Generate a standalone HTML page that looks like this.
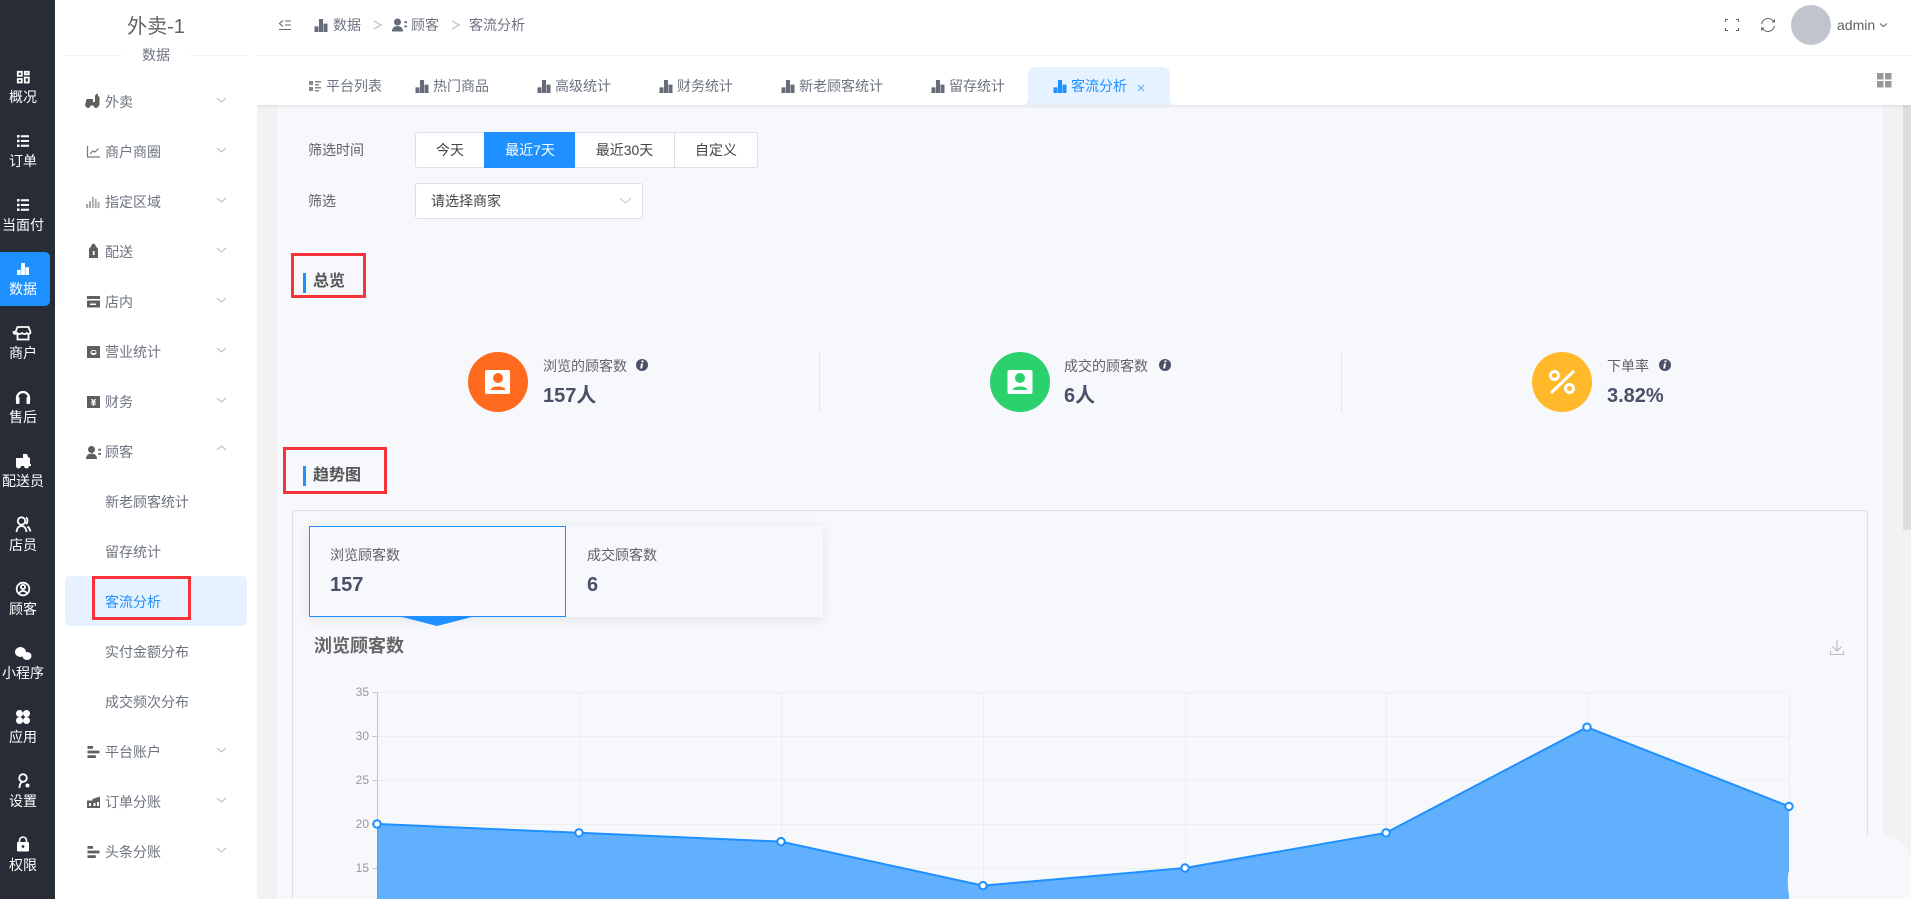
<!DOCTYPE html>
<html lang="zh"><head><meta charset="utf-8"><title>客流分析</title>
<style>
html,body{margin:0;padding:0;width:1911px;height:899px;overflow:hidden;background:#f2f2f2;font-family:"Liberation Sans","Noto Sans CJK SC",sans-serif;}
#w{position:relative;width:1911px;height:899px;overflow:hidden;background:#f2f2f2}
#w div,#w span{position:absolute;box-sizing:border-box}
.t{white-space:nowrap;line-height:20px;font-size:14px;height:20px}
.r{left:0;width:46px;text-align:center;color:#fff}
.m{left:105px;color:#6d7380}
.tb{color:#6d7380;top:76px}
.l{color:#606266}
.b{top:132px;height:36px;background:#fff;border:1px solid #dcdfe6;line-height:34px;text-align:center;font-size:14px;color:#444;white-space:nowrap}
.red{border:3px solid #f63338}
.v{font-weight:bold;color:#4a5068;font-size:20px;line-height:24px;height:24px;white-space:nowrap}
svg{position:absolute;left:0;top:0}
</style></head><body><div id="w">

<div style="left:277px;top:105px;width:1606px;height:794px;background:#f6f8fc"></div>
<div style="left:1903px;top:105px;width:8px;height:425px;background:#dedede"></div>
<div style="left:257px;top:0;width:1654px;height:105px;background:#fff;box-shadow:0 1px 4px rgba(0,0,0,.1)"></div>
<div style="left:257px;top:55px;width:1654px;height:1px;background:#f2f2f2"></div>
<div style="left:55px;top:0;width:202px;height:899px;background:#fff"></div>
<div style="left:0;top:0;width:55px;height:899px;background:#282c36"></div>
<div style="left:0;top:252px;width:50px;height:54px;background:#1e90ff;border-radius:0 5px 5px 0"></div>
<div style="left:65px;top:55px;width:182px;height:1px;background:#f2f2f2"></div>
<div style="left:122px;top:50px;width:68px;height:12px;background:#fff"></div>
<div style="left:65px;top:576px;width:182px;height:50px;background:#e6f2ff;border-radius:5px"></div>

<div style="left:292px;top:510px;width:1576px;height:389px;border:1px solid #dcdfe6;border-bottom:0;border-radius:2px 2px 0 0"></div>
<div style="left:309px;top:526px;width:514px;height:91px;background:#f6f8fc;box-shadow:0 2px 12px rgba(0,0,0,.09)"></div>
<div style="left:309px;top:526px;width:257px;height:91px;background:#f6f8fc;border:1px solid #1e90ff"></div>

<svg width="1911" height="899" viewBox="0 0 1911 899" fill="none">
<defs>
<symbol id="bar" viewBox="0 0 14 14"><path fill="currentColor" d="M0 8h4.300v6H0zM4.800 0h4.400v14H4.800zM9.700 5H14v9H9.700z"/></symbol>
<symbol id="list" viewBox="0 0 12 12"><path fill="currentColor" d="M0 0h2.500v2.500H0zM3.800 .2H12v2H3.800zM0 4.800h2.500v2.500H0zM3.800 5H12v2H3.800zM0 9.500h2.500V12H0zM3.800 9.800H12v2H3.800z"/></symbol>
<symbol id="hb" viewBox="0 0 13 13"><path fill="currentColor" d="M0 0h6v3H0zM0 5h13v3H0zM0 10h9v3H0z"/></symbol>
<symbol id="cust" viewBox="0 0 15 13"><circle cx="5.500" cy="3.500" r="3.500" fill="currentColor"/><path fill="currentColor" d="M0 13c0-3.800 2.500-5.500 5.500-5.500S11 9.200 11 13zM12.300 2.800h2.700v1.800h-2.700zM12.300 7h2.700v1.800h-2.700z"/></symbol>
</defs>

<!-- rail icons -->
<g fill="none" stroke="#fff" stroke-width="1.800">
<path d="M17.800 71.800h4v4h-4zM24.800 71.800h4v2.500h-4zM17.800 79h4v3.500h-4zM24.800 77.500h4v5h-4z"/>
<path d="M15.500 332l2-5h11l2 5c0 2-2.500 2.500-3.700 1-1 1.500-3.300 1.500-4.800 0-1.500 1.500-3.800 1.500-4.800 0-1.200 1.500-3.700 1-3.700-1zM17.500 334v5.500h11V334"/>
<path d="M17 401v-3a6 6 0 0 1 12 0v3" stroke-width="2.300"/>
<circle cx="21.500" cy="521" r="3.700"/><path d="M16.500 532c.5-4 2.500-6 5-6s4.500 2 5 6M26 517.500c2 1 2 5 0 6.500M27.500 526.500c1.500 1.200 2.500 3 3 5"/>
<circle cx="23" cy="589" r="6.300"/><circle cx="23" cy="587" r="2.100"/><path d="M19 593.500c1-2 2.500-2.500 4-2.500s3 .5 4 2.500"/>
<circle cx="23" cy="778" r="3.800"/><path d="M19.500 788c0-3 1-5 2.500-6"/>
</g>
<g fill="#fff">
<use href="#list" x="17" y="135" width="12" height="12" color="#fff"/>
<use href="#list" x="17" y="199" width="12" height="12" color="#fff"/>
<use href="#bar" x="16" y="263" width="14" height="12" preserveAspectRatio="none" color="#fff"/>
<rect x="16" y="397" width="3.500" height="7" rx="1"/><rect x="26.500" y="397" width="3.500" height="7" rx="1"/>
<path d="M16 458h7v-4h4l1 3 2 1v6h1v2h-2a2.500 2.500 0 0 1-5 0h-3a2.500 2.500 0 0 1-5 0z"/>
<ellipse cx="20.500" cy="652" rx="5.500" ry="5"/><ellipse cx="27" cy="656" rx="4.500" ry="4"/>
<circle cx="19.500" cy="713.500" r="3.500"/><circle cx="26.500" cy="713.500" r="3.500"/><circle cx="19.500" cy="720.500" r="3.500"/><circle cx="26.500" cy="720.500" r="3.500"/>
<circle cx="27.500" cy="785.500" r="2"/>
<rect x="17" y="842" width="12" height="9.500" rx="1"/>
</g>
<path d="M19.500 842v-1.500a3.500 3.500 0 0 1 7 0V842" stroke="#fff" stroke-width="1.600"/>
<circle cx="23" cy="846.500" r="1.400" fill="#282c36"/>

<!-- menu icons -->
<g fill="#5f5f5f">
<path d="M86.500 99h6.500v3h2v-6.500l1.500-1.500h1.500v2l1.500 1v8.500h-1a2.500 2.500 0 0 1-5 0h-3a2.500 2.500 0 0 1-5 0h-.500z"/>
<path d="M87 296h13v3H87zM87 300.500h13v7H87z"/>
<rect x="90" y="303.500" width="6" height="1.500" fill="#fff"/>
<path d="M87 346h13v12H87z"/><rect x="90.500" y="350" width="6" height="5" rx="2.500" fill="#fff"/><rect x="91.800" y="351" width="3.500" height="2" fill="#5f5f5f"/>
<rect x="87" y="396" width="13" height="12"/><path d="M91 399h1.500l1 1.700 1-1.700H96l-1.500 2.500H96v1h-1.800v1H96v1h-1.800v1.200h-1.400V404.500H91v-1h1.800v-1H91v-1h1.500z" fill="#fff"/>
<use href="#cust" x="86" y="446" width="15" height="13" color="#5f5f5f"/>
<use href="#hb" x="87" y="746" width="13" height="12" preserveAspectRatio="none" color="#5f5f5f"/>
<use href="#hb" x="87" y="846" width="13" height="12" preserveAspectRatio="none" color="#5f5f5f"/>
<path d="M87 800.500h5.500V799l7.500-2.500V808H87z"/><path d="M89 803h2v3h-2zM93.500 803h2v3h-2zM97 802h2v4h-2z" fill="#fff"/>
<path d="M91.500 245.800a2 2 0 1 1 4 0l2.500 3V258h-9v-9.200z"/><rect x="92.800" y="251" width="1.800" height="4" fill="#fff"/>
</g>
<path d="M87.500 146v11h12.500M90 154l3-3 2 1 3.500-3.500" stroke="#777" stroke-width="1.200"/>
<path d="M86 208v-4h2.200v4zM89 208v-7h2v7zM92 208v-11h1.800v11zM94.800 208v-9h1.800v9zM97.500 208v-6h2v6z" fill="#aaa"/>

<!-- menu chevrons -->
<g stroke="#b5b8bf" stroke-width="1" fill="none">
<path d="M217 98l4.500 4 4.500-4M217 148l4.500 4 4.500-4M217 198l4.500 4 4.500-4M217 248l4.500 4 4.500-4M217 298l4.500 4 4.500-4M217 348l4.500 4 4.500-4M217 398l4.500 4 4.500-4M217 450l4.500-4 4.500 4"/>
<path d="M217 748l4.500 4 4.500-4M217 798l4.500 4 4.500-4M217 848l4.500 4 4.500-4"/>
</g>

<!-- header icons -->
<g stroke="#666" stroke-width="1.100" fill="none">
<path d="M285 21h6M285 25h6M279 29.500h12M283 20.500l-3.500 3 3.500 3"/>
<path d="M1725.500 22v-2.500h2.500M1736 19.500h2.500V22M1725.500 28v2.500h2.500M1738.500 28v2.500H1736"/>
<path d="M1773.600 21.700A6.500 6.500 0 0 0 1761.600 24M1762.400 28.300A6.500 6.500 0 0 0 1774.400 26"/>
<path d="M1880 23.500l3.500 3 3.500-3"/>
</g>
<path d="M1771.500 22.500h3.500V19zM1764.500 27.500H1761V31z" fill="#666"/>
<circle cx="1811" cy="25" r="20" fill="#bfc4cd"/>
<use href="#bar" x="314" y="19" width="14" height="13" preserveAspectRatio="none" color="#666b7a"/>
<use href="#cust" x="392" y="18" width="15" height="14" preserveAspectRatio="none" color="#666b7a"/>
<path d="M374 21l7 4-7 4M452 21l7 4-7 4" stroke="#c4c7cc" stroke-width="1.500" fill="none"/>

<!-- tab icons -->
<path d="M309 81h4v4h-4zM315 81h6v1.500h-6zM315 84h4v1.500h-4zM309 87h4v4h-4zM315 87h6v1.500h-6zM315 90h4v1.500h-4z" fill="#888"/>
<use href="#bar" x="415" y="80" width="14" height="13" preserveAspectRatio="none" color="#666b7a"/>
<use href="#bar" x="537" y="80" width="14" height="13" preserveAspectRatio="none" color="#666b7a"/>
<use href="#bar" x="659" y="80" width="14" height="13" preserveAspectRatio="none" color="#666b7a"/>
<use href="#bar" x="781" y="80" width="14" height="13" preserveAspectRatio="none" color="#666b7a"/>
<use href="#bar" x="931" y="80" width="14" height="13" preserveAspectRatio="none" color="#666b7a"/>
<path d="M1022 105Q1028 105 1028 97V75Q1028 67 1036 67H1162Q1170 67 1170 75V97Q1170 105 1176 105Z" fill="#e6f2ff"/>
<use href="#bar" x="1053" y="80" width="14" height="13" preserveAspectRatio="none" color="#1e90ff"/>
<path d="M1138 85l6 6M1144 85l-6 6" stroke="#5aa9f8" stroke-width="1"/>
<path d="M1877 73h6.500v6.500H1877zM1885 73h6.500v6.500H1885zM1877 81h6.500v6.500H1877zM1885 81h6.500v6.500H1885z" fill="#999"/>

<!-- section bars -->
<rect x="303" y="273" width="3" height="20" fill="#1e90ff"/>
<rect x="303" y="466" width="3" height="20" fill="#1e90ff"/>

<!-- stats -->
<circle cx="498" cy="382" r="30" fill="#ff6a1f"/>
<rect x="485" y="370" width="25" height="24" rx="2" fill="#fff"/>
<circle cx="498" cy="378" r="5" fill="#ff6a1f"/><path d="M490.500 390c1-3 4-3.500 7.500-3.500s6.500.5 7.500 3.500z" fill="#ff6a1f"/>
<circle cx="1020" cy="382" r="30" fill="#2ad16c"/>
<rect x="1007.500" y="370" width="25" height="24" rx="2" fill="#fff"/>
<circle cx="1020" cy="378" r="5" fill="#2ad16c"/><path d="M1012.500 390c1-3 4-3.500 7.500-3.500s6.500.5 7.500 3.500z" fill="#2ad16c"/>
<circle cx="1562" cy="382" r="30" fill="#ffb92b"/>
<circle cx="1554.500" cy="375.500" r="4" stroke="#fff" stroke-width="3"/>
<circle cx="1569.500" cy="388.500" r="4" stroke="#fff" stroke-width="3"/>
<path d="M1574 371l-23 22" stroke="#fff" stroke-width="3"/>
<path d="M819.500 352v60M1341.500 352v60" stroke="#e3e5ea"/>
<g fill="#4a5068"><circle cx="642" cy="365" r="6"/><circle cx="1165" cy="365" r="6"/><circle cx="1665" cy="365" r="6"/></g>
<g fill="#fff"><path d="M641.500 360.500h2v1.800h-2zM641 363.500h2l-.8 5h-2zM1164.500 360.500h2v1.800h-2zM1164 363.500h2l-.8 5h-2zM1664.500 360.500h2v1.800h-2zM1664 363.500h2l-.8 5h-2z"/></g>

<path d="M402 617H472L437 626Z" fill="#1e90ff"/>

<!-- download -->
<path d="M1837 640v11M1832.500 646.500l4.500 4.500 4.500-4.500M1830.500 651v3.500h13V651" stroke="#bbb" stroke-width="1.100"/>

<!-- chart -->
<g stroke="#eeeeee" stroke-width="1">
<path d="M377 692.500H1789M377 736.500H1789M377 780.500H1789M377 824.500H1789M377 868.500H1789"/>
<path d="M579.500 692V899M781.500 692V899M983.500 692V899M1185.500 692V899M1386.500 692V899M1587.500 692V899M1789.500 692V899"/>
</g>
<path d="M377.500 692V899M372 692.500h5M372 736.500h5M372 780.500h5M372 824.500h5M372 868.500h5" stroke="#c4c6ca"/>
<path d="M377 824L579 832.800L781 841.600L983 885.600L1185 868L1386 832.800L1587 727.200L1789 806.400V899H377Z" fill="#1e90ff" fill-opacity=".69"/>
<path d="M377 824L579 832.800L781 841.600L983 885.600L1185 868L1386 832.800L1587 727.200L1789 806.400" stroke="#1e90ff" stroke-width="2" fill="none"/>
<g fill="#fff" stroke="#1e90ff" stroke-width="2">
<circle cx="377" cy="824" r="3.700"/><circle cx="579" cy="832.800" r="3.700"/><circle cx="781" cy="841.600" r="3.700"/><circle cx="983" cy="885.600" r="3.700"/><circle cx="1185" cy="868" r="3.700"/><circle cx="1386" cy="832.800" r="3.700"/><circle cx="1587" cy="727.200" r="3.700"/><circle cx="1789" cy="806.400" r="3.700"/>
</g>

<!-- bottom-right overlay -->
<path d="M1789.500 899C1787 885 1787 870 1791 868C1800 862 1830 855 1867 836H1885C1900 836 1908 848 1910 858L1911 860V899Z" fill="#f6f8fc"/>
</svg>

<!-- rail text -->
<span class="t r" style="top:87px">概况</span>
<span class="t r" style="top:151px">订单</span>
<span class="t r" style="top:215px">当面付</span>
<span class="t r" style="top:279px">数据</span>
<span class="t r" style="top:343px">商户</span>
<span class="t r" style="top:407px">售后</span>
<span class="t r" style="top:471px">配送员</span>
<span class="t r" style="top:535px">店员</span>
<span class="t r" style="top:599px">顾客</span>
<span class="t r" style="top:663px">小程序</span>
<span class="t r" style="top:727px">应用</span>
<span class="t r" style="top:791px">设置</span>
<span class="t r" style="top:855px">权限</span>

<!-- menu text -->
<span class="t" style="left:55px;width:202px;top:15px;text-align:center;font-size:20px;line-height:24px;height:24px;color:#606266">外卖-1</span>
<span class="t" style="left:55px;width:202px;top:45px;text-align:center;color:#6d7380">数据</span>
<span class="t m" style="top:92px">外卖</span>
<span class="t m" style="top:142px">商户商圈</span>
<span class="t m" style="top:192px">指定区域</span>
<span class="t m" style="top:242px">配送</span>
<span class="t m" style="top:292px">店内</span>
<span class="t m" style="top:342px">营业统计</span>
<span class="t m" style="top:392px">财务</span>
<span class="t m" style="top:442px">顾客</span>
<span class="t m" style="top:492px">新老顾客统计</span>
<span class="t m" style="top:542px">留存统计</span>
<span class="t m" style="top:592px;color:#1e90ff">客流分析</span>
<span class="t m" style="top:642px">实付金额分布</span>
<span class="t m" style="top:692px">成交频次分布</span>
<span class="t m" style="top:742px">平台账户</span>
<span class="t m" style="top:792px">订单分账</span>
<span class="t m" style="top:842px">头条分账</span>
<div class="red" style="left:92px;top:576px;width:99px;height:44px"></div>

<!-- header text -->
<span class="t" style="left:333px;top:15px;color:#6d7380">数据</span>
<span class="t" style="left:411px;top:15px;color:#6d7380">顾客</span>
<span class="t" style="left:469px;top:15px;color:#6d7380">客流分析</span>
<span class="t" style="left:1837px;top:15px;color:#606266;font-size:14px">admin</span>

<!-- tabs text -->
<span class="t tb" style="left:326px">平台列表</span>
<span class="t tb" style="left:433px">热门商品</span>
<span class="t tb" style="left:555px">高级统计</span>
<span class="t tb" style="left:677px">财务统计</span>
<span class="t tb" style="left:799px">新老顾客统计</span>
<span class="t tb" style="left:949px">留存统计</span>
<span class="t tb" style="left:1071px;color:#1e90ff">客流分析</span>

<!-- filters -->
<span class="t l" style="left:308px;top:140px">筛选时间</span>
<span class="t l" style="left:308px;top:191px">筛选</span>
<div class="b" style="left:415px;width:70px;border-radius:3px 0 0 3px">今天</div>
<div class="b" style="left:484px;width:92px;background:#1e90ff;border-color:#1e90ff;color:#fff">最近7天</div>
<div class="b" style="left:575px;width:100px;border-left:0">最近30天</div>
<div class="b" style="left:674px;width:84px;border-radius:0 3px 3px 0">自定义</div>
<div class="b" style="left:415px;top:183px;width:228px;text-align:left;padding-left:15px;border-radius:3px">请选择商家</div>
<svg width="1911" height="899" viewBox="0 0 1911 899" fill="none"><path d="M620 198l5.500 5 5.500-5" stroke="#c4c7cf" stroke-width="1"/></svg>

<!-- section titles -->
<div class="red" style="left:291px;top:253px;width:75px;height:45px"></div>
<span class="t" style="left:313px;top:272px;font-size:16px;font-weight:bold;color:#555">总览</span>
<div class="red" style="left:283px;top:447px;width:104px;height:47px"></div>
<span class="t" style="left:313px;top:466px;font-size:16px;font-weight:bold;color:#555">趋势图</span>

<!-- stats text -->
<span class="t l" style="left:543px;top:356px">浏览的顾客数</span>
<span class="v" style="left:543px;top:384px">157人</span>
<span class="t l" style="left:1064px;top:356px">成交的顾客数</span>
<span class="v" style="left:1064px;top:384px">6人</span>
<span class="t l" style="left:1607px;top:356px">下单率</span>
<span class="v" style="left:1607px;top:384px">3.82%</span>

<!-- trend tabs -->
<span class="t l" style="left:330px;top:545px">浏览顾客数</span>
<span class="v" style="left:330px;top:573px">157</span>
<span class="t l" style="left:587px;top:545px">成交顾客数</span>
<span class="v" style="left:587px;top:573px">6</span>
<span class="t" style="left:314px;top:636px;font-size:18px;font-weight:bold;color:#666">浏览顾客数</span>

<!-- axis labels -->
<span class="t" style="left:340px;width:29px;text-align:right;top:682px;font-size:12px;color:#999">35</span>
<span class="t" style="left:340px;width:29px;text-align:right;top:726px;font-size:12px;color:#999">30</span>
<span class="t" style="left:340px;width:29px;text-align:right;top:770px;font-size:12px;color:#999">25</span>
<span class="t" style="left:340px;width:29px;text-align:right;top:814px;font-size:12px;color:#999">20</span>
<span class="t" style="left:340px;width:29px;text-align:right;top:858px;font-size:12px;color:#999">15</span>
</div></body></html>
